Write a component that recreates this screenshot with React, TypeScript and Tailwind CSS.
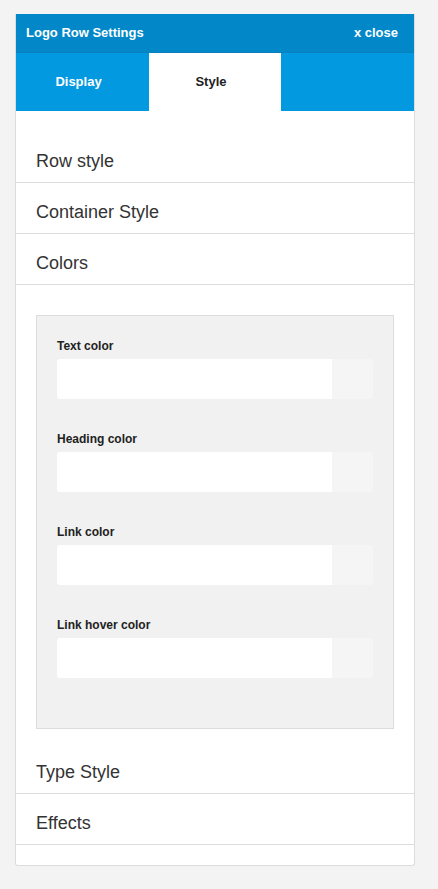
import React from "react";

const font = { fontFamily: '"Liberation Sans", Arial, Helvetica, sans-serif' };

function Row({ label }: { label: string }) {
  return (
    <div className="h-[51px] flex items-end pb-[10px] px-5 border-b border-[#dddddd]">
      <span className="text-[18px] text-[#333333] leading-[22px]">{label}</span>
    </div>
  );
}

function ColorField({ label }: { label: string }) {
  return (
    <div className="flex flex-col">
      <label className="text-[12px] font-bold text-[#222222] leading-[14px] h-[14px] mb-[6px]">{label}</label>
      <div className="flex h-[40px] w-[316px]">
        <div className="flex-1 bg-white rounded-l-[3px]" />
        <div className="w-[41px] bg-[#f5f5f5] rounded-r-[3px]" />
      </div>
    </div>
  );
}

export default function App() {
  return (
    <div className="min-h-[889px] w-[438px] bg-[#f3f3f3] pt-[14px] pl-[15px]" style={font}>
      <div className="w-[400px] bg-white border border-[#dcdcdc] border-t-0 rounded-b-[3px] overflow-hidden">
        <div className="h-[39px] bg-[#0288c8] border-b border-[#0a80bd] flex items-center justify-between pl-[10px] pr-[16px]">
          <span className="text-white font-bold text-[13px]">Logo Row Settings</span>
          <span className="text-white font-bold text-[13px]">x close</span>
        </div>
        <div className="h-[58px] bg-[#0399e0] flex">
          <div className="w-[133px] flex items-center justify-center pr-2 text-white font-bold text-[13px]">Display</div>
          <div className="w-[132px] bg-white flex items-center justify-center pr-2 text-[#222222] font-bold text-[13px]">Style</div>
          <div className="flex-1" />
        </div>
        <div className="pt-[21px]">
          <Row label="Row style" />
          <Row label="Container Style" />
          <Row label="Colors" />
          <div className="px-5 pt-[30px] pb-[14px]">
            <div className="bg-[#f1f1f1] border border-[#dddddd] pl-[20px] pt-[23px] pb-[50px] flex flex-col gap-[33px]">
              <ColorField label="Text color" />
              <ColorField label="Heading color" />
              <ColorField label="Link color" />
              <ColorField label="Link hover color" />
            </div>
          </div>
          <Row label="Type Style" />
          <Row label="Effects" />
          <div className="h-[20px]" />
        </div>
      </div>
    </div>
  );
}
